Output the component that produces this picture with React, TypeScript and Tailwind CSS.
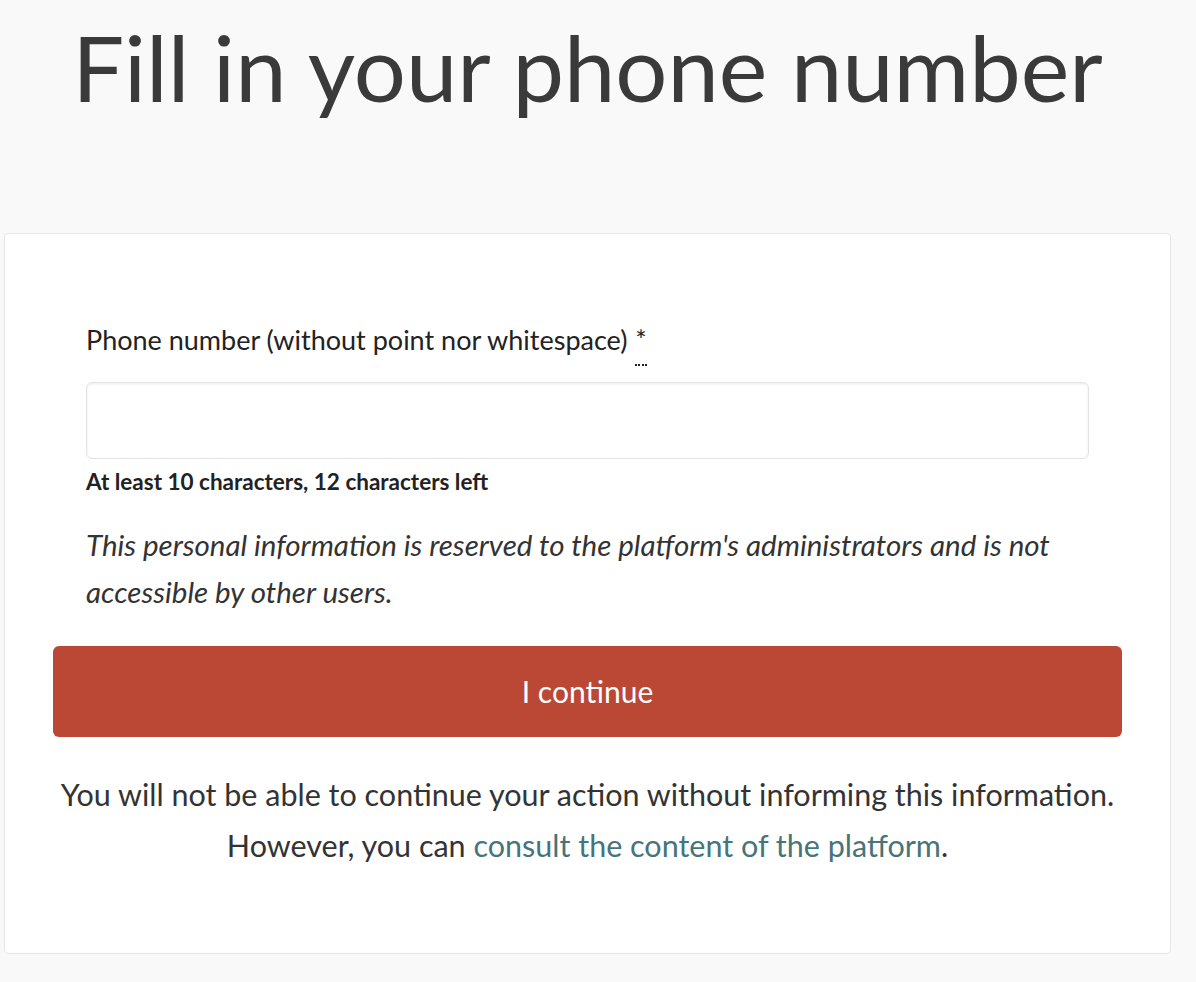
export default function App() {
  return (
    <div className="min-h-screen bg-[#f9f9f9] pr-[25px] pl-[4px] font-['Lato',sans-serif] text-[#333]">
      <h1 className="pt-[12px] text-center text-[92px] leading-[110px] font-normal text-[#3a3a3a]">
        Fill in your phone number
      </h1>
      <div className="mt-[111px] rounded border border-[#e6e6e6] bg-white px-[48px] pt-[91px] pb-[82px]">
        <form className="flex flex-col" onSubmit={(e) => e.preventDefault()}>
          <div className="px-[33px]">
            <label htmlFor="phone" className="block text-[27px] leading-[30px] text-[#222]">
              Phone number (without point nor whitespace){" "}
              <abbr title="required" className="ml-[1px] no-underline border-b-2 border-dotted border-[#222] pb-[8px]">
                *
              </abbr>
            </label>
            <input
              id="phone"
              name="phone"
              type="tel"
              className="mt-[27px] block h-[77px] w-full rounded-md border border-[#e3e3e3] px-4 text-[24px] shadow-[inset_0_1px_3px_rgba(0,0,0,0.08)] focus:outline-none"
            />
            <p className="mt-[11px] text-[22.5px] leading-[24px] font-bold text-[#222]">
              At least 10 characters, 12 characters left
            </p>
            <p className="mt-[27px] text-[29.5px] leading-[47px] italic text-[#333]">
              This personal information is reserved to the platform's administrators and is not accessible by other users.
            </p>
          </div>
          <button
            type="submit"
            className="mt-[31px] h-[91px] w-full rounded-md bg-[#bb4834] text-[30px] text-white"
          >
            I continue
          </button>
          <p className="mt-[32px] text-center text-[30.5px] leading-[51px] text-[#333]">
            You will not be able to continue your action without informing this information.
            <br />
            However, you can{" "}
            <a href="#" className="text-[#46747a]">
              consult the content of the platform
            </a>
            .
          </p>
        </form>
      </div>
    </div>
  );
}
